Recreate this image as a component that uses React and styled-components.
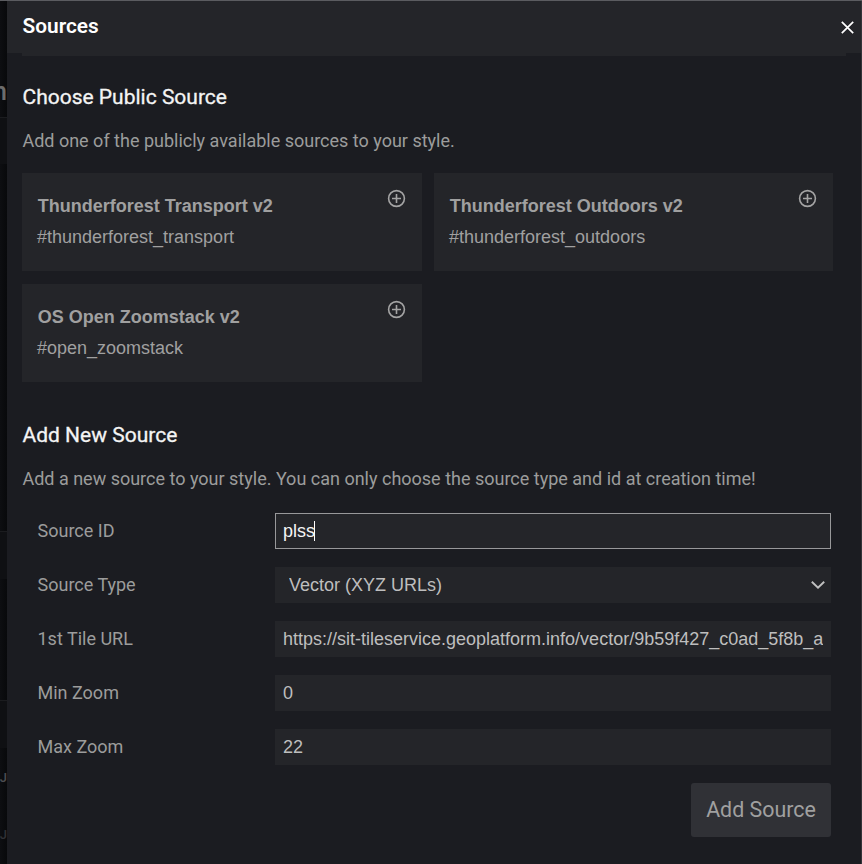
import React from "react";
import styled, { createGlobalStyle } from "styled-components";

const GlobalStyle = createGlobalStyle`
  * { box-sizing: border-box; }
  body {
    margin: 0;
    background: #0c0d10;
    overflow: hidden;
    font-family: Roboto, "Liberation Sans", sans-serif;
  }
  h1, h2, p { margin: 0; }
`;

const Screen = styled.div`
  display: flex;
  width: 862px;
  height: 864px;
  border-top: 1px solid #5b5c60;
  overflow: hidden;
`;

const Backdrop = styled.div`
  display: flex;
  flex-direction: column;
  width: 7px;
  flex: none;
  overflow: hidden;
  background: linear-gradient(to right, #0d0e11, #08090b);
`;

const Band = styled.div`
  display: flex;
  flex: none;
  align-items: flex-start;
  justify-content: flex-end;
  height: ${(p) => p.$height}px;
  background: ${(p) => (p.$raised ? "#0f1013" : "transparent")};
  border-top: ${(p) => (p.$line ? "1px solid #1b1c1f" : "0")};
`;

const Fragment = styled.span`
  flex: none;
  margin-top: ${(p) => p.$top}px;
  font-size: ${(p) => p.$size}px;
  line-height: 30px;
  font-weight: 500;
  color: ${(p) => p.$tone};
`;

const Modal = styled.main`
  width: 855px;
  flex: none;
  background: #1b1c21;
  border-right: 1px solid #33353a;
`;

const Header = styled.header`
  display: flex;
  justify-content: space-between;
  height: 52px;
  background: #242529;
  padding: 0 7px 0 15.6px;
`;

const HeaderEdge = styled.div`
  height: 3px;
  margin: 0 15px;
  background: #242529;
`;

const Title = styled.h1`
  font-size: 20.8px;
  line-height: 51px;
  font-weight: 600;
  color: #fff;
`;

const CloseButton = styled.button`
  display: flex;
  align-items: center;
  width: 13px;
  height: 52px;
  padding: 0;
  border: 0;
  background: none;
`;

const Section = styled.section`
  padding: ${(p) => p.$top}px 28px 0 15px;
`;

const Heading = styled.h2`
  padding-left: 0.5px;
  font-size: 21px;
  line-height: 30px;
  font-weight: 400;
  -webkit-text-stroke: 0.3px #f4f4f4;
  color: #f4f4f4;
`;

const Lead = styled.p`
  margin-top: 14px;
  padding-left: 0.4px;
  font-size: 18px;
  line-height: 30px;
  color: #9c9c9c;
  white-space: nowrap;
`;

const Cards = styled.div`
  display: grid;
  grid-template-columns: 400px 399px;
  grid-auto-rows: 98px;
  gap: 13px 12px;
  margin-top: 17px;
`;

const Card = styled.article`
  display: flex;
  justify-content: space-between;
  padding: 16px 16px 0 15px;
  background: #242529;
  font-family: "Liberation Sans", Arial, sans-serif;
  font-size: 18px;
  line-height: 31px;
  color: #a0a0a0;
`;

const CardText = styled.div`
  padding-top: 2px;
`;

const CardName = styled.div`
  font-weight: 700;
  padding-left: 0.7px;
`;

const CardId = styled.div``;

const Form = styled.div`
  display: flex;
  flex-direction: column;
  gap: 18px;
  margin-top: 19px;
  padding: 0 2px 0 15px;
`;

const Row = styled.label`
  display: grid;
  grid-template-columns: 237.5px 556px;
  height: 36px;
  padding-left: 0.5px;
  line-height: 36px;
  font-size: 18px;
  color: #9c9c9c;
`;

const Field = styled.div`
  display: flex;
  align-items: center;
  justify-content: space-between;
  padding: 0 ${(p) => (p.$select ? 6 : 8)}px 0 ${(p) => (p.$select ? 14 : 8)}px;
  background: #242529;
  box-shadow: ${(p) => (p.$focused ? "inset 0 0 0 1px #98989a" : "none")};
  color: ${(p) => (p.$focused ? "#f4f4f4" : "#bebebe")};
  font-family: "Liberation Sans", Arial, sans-serif;
  font-size: 18px;
  white-space: nowrap;
`;

const Value = styled.span`
  overflow: hidden;
`;

const FocusedValue = styled.span`
  width: 32px;
  height: 20px;
  line-height: 20px;
  border-right: 1px solid #fff;
`;

const Actions = styled.div`
  display: flex;
  justify-content: flex-end;
`;

const AddButton = styled.button`
  width: 140px;
  height: 54px;
  padding: 0 0 2px;
  border: 0;
  border-radius: 3px;
  background: #303136;
  color: #a0a0a0;
  font-family: Roboto, sans-serif;
  font-size: 21.4px;
`;

const Icon = styled.svg`
  display: block;
  flex: none;
  fill: none;
  stroke: ${(p) => p.$tone};
  stroke-width: ${(p) => p.$weight};
`;

const sources = [
  ["Thunderforest Transport v2", "#thunderforest_transport"],
  ["Thunderforest Outdoors v2", "#thunderforest_outdoors"],
  ["OS Open Zoomstack v2", "#open_zoomstack"],
];

const PlusCircle = () => (
  <Icon width="19" height="19" viewBox="0 0 19 19" $tone="#a4a4a4" $weight="1.6">
    <circle cx="9.5" cy="9.5" r="7.9" />
    <path d="M9.5 5v9M5 9.5h9" />
  </Icon>
);

export default function App() {
  return (
    <>
      <GlobalStyle />
      <Screen>
        <Backdrop>
          <Band $height={116}><Fragment $top={75} $size={26} $tone="#6c6c6c">n</Fragment></Band>
          <Band $height={47} $line $raised />
          <Band $height={367} />
          <Band $height={48} $line $raised />
          <Band $height={121} />
          <Band $height={48} $line $raised />
          <Band $height={56}><Fragment $top={15} $size={13} $tone="#4c4d51">J</Fragment></Band>
          <Band $height={60}><Fragment $top={16} $size={13} $tone="#303135">J</Fragment></Band>
        </Backdrop>
        <Modal>
          <Header>
            <Title>Sources</Title>
            <CloseButton aria-label="Close">
              <Icon width="13" height="13" viewBox="0 0 13 13" $tone="#fff" $weight="1.7">
                <path d="M.8.8l11.4 11.4M12.2.8L.8 12.2" />
              </Icon>
            </CloseButton>
          </Header>
          <HeaderEdge />
          <Section $top={26}>
            <Heading>Choose Public Source</Heading>
            <Lead>Add one of the publicly available sources to your style.</Lead>
            <Cards>
              {sources.map(([name, id]) => (
                <Card key={id}>
                  <CardText>
                    <CardName>{name}</CardName>
                    <CardId>{id}</CardId>
                  </CardText>
                  <PlusCircle />
                </Card>
              ))}
            </Cards>
          </Section>
          <Section $top={38}>
            <Heading>Add New Source</Heading>
            <Lead>Add a new source to your style. You can only choose the source type and id at creation time!</Lead>
            <Form>
              <Row>Source ID<Field $focused><FocusedValue>plss</FocusedValue></Field></Row>
              <Row>
                Source Type
                <Field $select>
                  <Value>Vector (XYZ URLs)</Value>
                  <Icon width="14" height="8" viewBox="0 0 14 8" $tone="#c0c0c0" $weight="1.9">
                    <path d="M.8.8L7 6.7 13.2.8" />
                  </Icon>
                </Field>
              </Row>
              <Row>1st Tile URL<Field><Value>https://sit-tileservice.geoplatform.info/vector/9b59f427_c0ad_5f8b_a</Value></Field></Row>
              <Row>Min Zoom<Field><Value>0</Value></Field></Row>
              <Row>Max Zoom<Field><Value>22</Value></Field></Row>
              <Actions><AddButton>Add Source</AddButton></Actions>
            </Form>
          </Section>
        </Modal>
      </Screen>
    </>
  );
}
